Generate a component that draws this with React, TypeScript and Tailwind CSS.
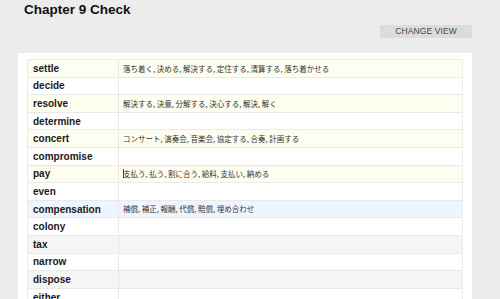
import React from 'react';

type Row = {
    word: string;
    meaning?: string;
    tone: 'plain' | 'answered' | 'current' | 'muted';
    caret?: boolean;
};

const rows: Row[] = [
    { word: 'settle', meaning: '落ち着く, 決める, 解決する, 定住する, 清算する, 落ち着かせる', tone: 'answered' },
    { word: 'decide', tone: 'plain' },
    { word: 'resolve', meaning: '解決する, 決意, 分解する, 決心する, 解決, 解く', tone: 'answered' },
    { word: 'determine', tone: 'plain' },
    { word: 'concert', meaning: 'コンサート, 演奏会, 音楽会, 協定する, 合奏, 計画する', tone: 'answered' },
    { word: 'compromise', tone: 'plain' },
    { word: 'pay', meaning: '支払う, 払う, 割に合う, 給料, 支払い, 納める', tone: 'answered', caret: true },
    { word: 'even', tone: 'plain' },
    { word: 'compensation', meaning: '補償, 補正, 報酬, 代償, 賠償, 埋め合わせ', tone: 'current' },
    { word: 'colony', tone: 'plain' },
    { word: 'tax', tone: 'muted' },
    { word: 'narrow', tone: 'plain' },
    { word: 'dispose', tone: 'muted' },
    { word: 'either', tone: 'plain' },
];

const toneBg: Record<Row['tone'], string> = {
    plain: 'bg-white',
    answered: 'bg-[#fdfdf0]',
    current: 'bg-[#eef5fd]',
    muted: 'bg-[#f5f5f5]',
};

function WordRow({ row }: { row: Row }) {
    return (
        <div className={`flex h-[17.6px] shrink-0 border-b border-[#e9e9e9] ${toneBg[row.tone]}`}>
            <div className="w-[91px] shrink-0 border-r border-[#e9e9e9] pl-[5px] flex items-center text-[10px] font-bold text-[#1a1a1a]">
                {row.word}
            </div>
            <div className="flex-1 pl-[4px] flex items-center text-[7.5px] text-[#333] font-['Noto_Sans_CJK_JP','Noto_Sans',sans-serif] whitespace-nowrap">
                {row.caret && <span className="w-px h-[9px] bg-[#444] mr-[-1px]" />}
                {row.meaning}
            </div>
        </div>
    );
}

export default function App() {
    return (
        <div className="w-[500px] h-[299px] overflow-hidden bg-[#ececec] font-['Liberation_Sans',Arial,sans-serif] flex flex-col">
            <h1 className="pl-[24px] pt-[2px] text-[13.5px] leading-[16px] font-bold text-[#111]">Chapter 9 Check</h1>

            <div className="flex justify-end pr-[28px] pt-[7px]">
                <button className="w-[92px] h-[13px] bg-[#dcdcdc] text-[8.5px] leading-[13px] text-[#444] tracking-[0.1px]">
                    CHANGE VIEW
                </button>
            </div>

            <div className="ml-[18px] mr-[28px] mt-[15px] flex-1 bg-white pt-[6px] pl-[9px] pr-[9px] overflow-hidden">
                <div className="flex flex-col border-t border-l border-r border-[#ececec]">
                    {rows.map((r) => (
                        <WordRow key={r.word} row={r} />
                    ))}
                </div>
            </div>
        </div>
    );
}
